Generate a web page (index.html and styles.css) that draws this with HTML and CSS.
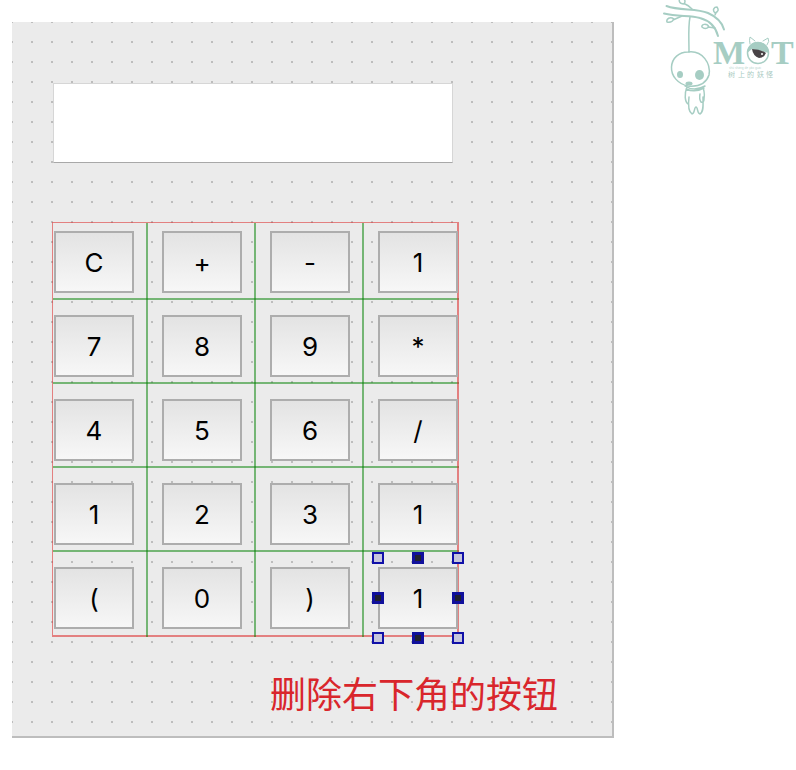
FILE: index.html
```html
<!DOCTYPE html>
<html lang="zh-CN">
<head>
<meta charset="utf-8">
<title>MOT</title>
<link rel="stylesheet" href="styles.css">
</head>
<body>
<div class="page">
  <main class="form">
    <input class="display" type="text" aria-label="Display">
    <div class="keypad">
      <div class="cell"><button class="key">C</button></div>
      <div class="cell"><button class="key">+</button></div>
      <div class="cell"><button class="key">-</button></div>
      <div class="cell"><button class="key">1</button></div>
      <div class="cell"><button class="key">7</button></div>
      <div class="cell"><button class="key">8</button></div>
      <div class="cell"><button class="key">9</button></div>
      <div class="cell"><button class="key">*</button></div>
      <div class="cell"><button class="key">4</button></div>
      <div class="cell"><button class="key">5</button></div>
      <div class="cell"><button class="key">6</button></div>
      <div class="cell"><button class="key">/</button></div>
      <div class="cell"><button class="key">1</button></div>
      <div class="cell"><button class="key">2</button></div>
      <div class="cell"><button class="key">3</button></div>
      <div class="cell"><button class="key">1</button></div>
      <div class="cell"><button class="key">(</button></div>
      <div class="cell"><button class="key">0</button></div>
      <div class="cell"><button class="key">)</button></div>
      <div class="cell">
        <div class="selected">
          <button class="key">1</button>
          <i class="handle corner top left"></i>
          <i class="handle top middle"></i>
          <i class="handle corner top right"></i>
          <i class="handle center left"></i>
          <i class="handle center right"></i>
          <i class="handle corner bottom left"></i>
          <i class="handle bottom middle"></i>
          <i class="handle corner bottom right"></i>
        </div>
      </div>
    </div>
    <p class="caption">删除右下角的按钮</p>
  </main>
  <svg class="logo" viewBox="0 0 140 120" role="img" aria-label="MOT 树上的妖怪">
    <g class="line">
      <path class="branch" d="M10.500 6C24 11 40 8 52 13C61 17 66 22 68 29.500"/>
      <path class="branch" d="M8 13.500C22 17 34 15 44 18C55 21 60 28 62 36"/>
      <path d="M36 9Q32 5 29 4M28 4C23 4 22 0 25 -2C29 -1 30 1 28 4M59 15L60 13M59 13C56 10 58 7 61 7Q64 11 59 13M26 16L17 20M18 19C14 16 10 19 11 22Q16 23 18 19M59 28L52 27M53 27C51 23 45 24 46 27Q49 30 53 27"/>
      <path d="M34 17C32 27 33 38 33 52"/>
      <path d="M32 52C47 50 55 64 53 75C50 84 43 87 32 86C22 84 15 76 15.500 67C16 58 23 52 32 52Z"/>
      <path d="M29 86Q38 92 49 86M30 89Q39 93 48 88M31 87C28 94 29 102 32 104M47 87C49 94 49 98 47 101M33 97C32 105 33 112 36 114C39 114 38 107 40 107C42 107 41 114 44 114C48 112 47 104 47 97M44 94Q43 99 45 102Q48 103 48 99"/>
    </g>
    <g class="fill">
      <ellipse cx="24" cy="74.500" rx="3" ry="3.500"/>
      <ellipse cx="43.500" cy="75" rx="4.500" ry="5"/>
      <ellipse cx="33" cy="83.500" rx="3.500" ry="2"/>
      <text class="word" x="57" y="64">M</text>
      <text class="word" x="115" y="64">T</text>
      <path d="M91 53A11 11 0 0 1 113 53L96 49Z"/>
    </g>
    <circle class="line" cx="102" cy="53" r="10.500"/>
    <path class="line thin" d="M94 44Q93 40 94 37L99 41M107 41L112 38Q114 41 111 45"/>
    <path class="pupil" d="M96 49Q104 49 110 53Q108 58 103 58Q97 56 96 49Z"/>
    <circle class="glint" cx="106" cy="54" r="1"/>
    <text class="pinyin" x="73" y="69">shù shàng de yāo guài</text>
    <text class="tagline" y="77"><tspan x="72">树</tspan><tspan x="82">上</tspan><tspan x="91">的</tspan><tspan x="101">妖</tspan><tspan x="110">怪</tspan></text>
  </svg>
</div>
</body>
</html>
```
FILE: styles.css
```css
* {
  box-sizing: border-box;
}

body {
  margin: 0;
  background: #fff;
  font-family: Inter, "Noto Sans CJK SC", sans-serif;
}

.page {
  display: flex;
  align-items: flex-start;
  gap: 42px;
  padding-left: 12px;
}

.form {
  flex: 1;
  margin-top: 22px;
  padding: 61px 38px 18px 41px;
  border: solid #bdbdbd;
  border-width: 0 2px 2px 0;
  background: conic-gradient(from 90deg at 18px 18px, #bdbdbd 90deg, #ebebeb 0) -19px -19px / 20px 20px;
}

.display {
  display: block;
  width: 400px;
  height: 80px;
  padding: 0 12px;
  border: 1px solid #d6d6d6;
  border-bottom-color: #a8a8a8;
  background: #fff;
  font: 26px Inter, sans-serif;
}

.keypad {
  --green: rgb(0 128 0 / 50%);
  --red: rgb(220 40 40 / 55%);
  display: grid;
  grid-template-columns: 95px 108px 108px 95px;
  grid-template-rows: 77px 84px 84px 84px 85px;
  width: 407px;
  margin: 59px 0 0 -1px;
  border: solid var(--red);
  border-width: 1px 0 0 1px;
}

.cell {
  --right: var(--green);
  --bottom: var(--green);
  padding: 15px 0 0 14px;
  background:
    linear-gradient(var(--right), var(--right)) right / 2px 100% no-repeat,
    linear-gradient(var(--bottom), var(--bottom)) bottom / 100% 2px no-repeat;
}

.cell:nth-child(-n+4) {
  padding-top: 8px;
}

.cell:nth-child(4n+1) {
  padding-left: 1px;
}

.cell:nth-child(4n) {
  --right: var(--red);
}

.cell:nth-child(n+17) {
  --bottom: var(--red);
}

.key {
  display: block;
  width: 80px;
  height: 62px;
  padding: 1px 0 0;
  border: 2px solid #adadad;
  border-radius: 0;
  background: linear-gradient(#e3e3e3, #f7f7f7);
  color: #000;
  font: 26px Inter, sans-serif;
}

.selected {
  position: relative;
  width: 80px;
}

.handle {
  position: absolute;
  width: 12px;
  height: 12px;
  border: 3px solid #10109c;
  background: #222230;
}

.corner {
  border: 2px solid #1010a8;
  background: #c6c6dc;
}

.top { top: -15px; }
.center { top: 25px; }
.bottom { bottom: -15px; }
.left { left: -6px; }
.middle { left: 34px; }
.right { right: -6px; }

.caption {
  margin: 29px 16px 0 0;
  color: #d9262c;
  font: 36px/52px "Noto Sans CJK SC", sans-serif;
  text-align: right;
}

.logo {
  flex: none;
  width: 140px;
  height: 120px;
}

.line {
  fill: none;
  stroke: #a6cdc3;
  stroke-width: 1.5;
  stroke-linecap: round;
  stroke-linejoin: round;
}

.branch {
  stroke-width: 2;
}

.thin {
  stroke-width: 1;
}

.fill {
  fill: #a6cdc3;
}

.word {
  font: bold 34px "Liberation Serif", serif;
}

.pupil {
  fill: #494346;
}

.glint {
  fill: #fff;
}

.pinyin {
  fill: #b9d6cf;
  font: 3px Inter, sans-serif;
}

.tagline {
  fill: #a9cac2;
  font: 7px "Noto Sans CJK SC", sans-serif;
}
```
